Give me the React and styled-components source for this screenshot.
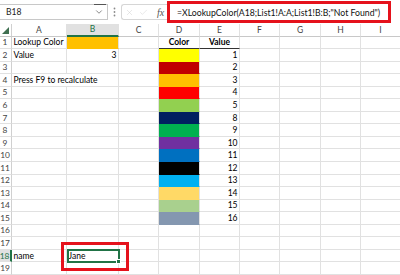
import styled, { createGlobalStyle } from "styled-components";
import { X, Check, ChevronDown } from "lucide-react";

const GlobalStyle = createGlobalStyle`
  html, body {
    margin: 0;
    padding: 0;
    background: #fff;
  }
  body {
    font-family: Lato, "Liberation Sans", sans-serif;
  }
`;

const Screen = styled.div`
  position: relative;
  width: 400px;
  height: 275px;
  overflow: hidden;
  background: #fff;
`;

const Toolbar = styled.div`
  height: 24px;
  display: flex;
  align-items: center;
`;

const NameBox = styled.div`
  position: relative;
  box-sizing: border-box;
  width: 108px;
  height: 16px;
  border: 1px solid #c8c8c8;
  border-left: none;
  display: flex;
  align-items: center;
  justify-content: space-between;
  padding: 0 3px 0 6px;
  font-size: 8.6px;
  color: #222;

  &::after {
    content: "";
    position: absolute;
    top: -1px;
    right: 1px;
    width: 12px;
    height: 1px;
    background: #555;
  }
`;

const Dots = styled.div`
  width: 13px;
  display: flex;
  justify-content: center;
  color: #8a8a8a;
`;

const FxBox = styled.div`
  box-sizing: border-box;
  width: 46px;
  height: 16px;
  border: 1px solid #d6d6d6;
  border-right: none;
  border-radius: 3px 0 0 3px;
  display: flex;
  align-items: center;
  gap: 5px;
  padding-left: 3px;
  color: #c4c4c4;
`;

const Fx = styled.span`
  font-family: "Liberation Serif", serif;
  font-style: italic;
  font-size: 10px;
  color: #555;
  margin-left: 4px;
`;

const FormulaInput = styled.div`
  box-sizing: border-box;
  width: 224px;
  height: 22px;
  border: 3px solid #e5121c;
  display: flex;
  align-items: center;
  padding-left: 7px;
  font-size: 8.7px;
  color: #111;
  white-space: nowrap;
`;

const Sheet = styled.div`
  display: grid;
  grid-template-columns: 12px 55px 52px 40px 41px 40px 40px 41px 40px 40px;
  grid-template-rows: 12.5px repeat(19, 12.55px);
`;

const Corner = styled.div`
  box-sizing: border-box;
  border-right: 1px solid #d0d0d0;
  border-bottom: 1px solid #c8c8c8;
  display: flex;
  align-items: flex-end;
  justify-content: center;
  padding-bottom: 2px;
`;

const ColHead = styled.div`
  box-sizing: border-box;
  background: ${(p) => (p.$active ? "#e1e1e1" : "#fff")};
  border-right: 1px solid #e1e1e1;
  border-bottom: ${(p) => (p.$active ? "2px solid #217346" : "1px solid #c8c8c8")};
  color: ${(p) => (p.$active ? "#217346" : "#444")};
  font-size: 8.5px;
  display: flex;
  align-items: center;
  justify-content: center;
`;

const RowHead = styled.div`
  box-sizing: border-box;
  background: ${(p) => (p.$active ? "#e1e1e1" : "#fff")};
  border-right: ${(p) => (p.$active ? "2px solid #217346" : "1px solid #d0d0d0")};
  border-bottom: 1px solid #e1e1e1;
  color: ${(p) => (p.$active ? "#217346" : "#444")};
  font-size: 8.4px;
  display: flex;
  align-items: center;
  justify-content: center;
  padding-right: 1px;
  white-space: nowrap;
`;

const Cell = styled.div`
  box-sizing: border-box;
  grid-column: ${(p) => (p.$span ? `span ${p.$span}` : "auto")};
  background: ${(p) => p.$fill || "#fff"};
  border-right: 1px solid #e1e1e1;
  border-bottom: 1px solid ${(p) => p.$line || p.$fill || "#e1e1e1"};
  display: flex;
  align-items: center;
  justify-content: ${(p) =>
    p.$align === "right" ? "flex-end" : p.$align === "center" ? "center" : "flex-start"};
  padding: 0 1.5px;
  font-size: 8.5px;
  font-weight: ${(p) => (p.$bold ? 700 : 400)};
  color: #000;
  white-space: nowrap;
`;

const Selection = styled.div`
  position: absolute;
  left: 66.5px;
  top: 249px;
  width: 53.5px;
  height: 13.5px;
  box-sizing: border-box;
  border: 2px solid #217346;

  &::after {
    content: "";
    position: absolute;
    right: -3px;
    bottom: -3px;
    width: 3px;
    height: 3px;
    background: #217346;
    border: 1px solid #fff;
  }
`;

const Callout = styled.div`
  position: absolute;
  left: 61px;
  top: 242px;
  width: 68px;
  height: 29px;
  box-sizing: border-box;
  border: 3px solid #e5121c;
`;

const columns = ["A", "B", "C", "D", "E", "F", "G", "H", "I"];

const swatches = [
  ["#FFFF00", 1],
  ["#C00000", 2],
  ["#FFC000", 3],
  ["#FF0000", 4],
  ["#92D050", 5],
  ["#002060", 8],
  ["#00B050", 9],
  ["#7030A0", 10],
  ["#0070C0", 11],
  ["#000000", 12],
  ["#00B0F0", 13],
  ["#FFD966", 14],
  ["#A9D08E", 15],
  ["#8497B0", 16],
];

function rowCells(r) {
  const cells = {};
  if (r === 1) {
    cells.A = { text: "Lookup Color" };
    cells.B = { fill: "#FFC000" };
    cells.D = { text: "Color", bold: true, align: "center", line: "#333" };
    cells.E = { text: "Value", bold: true, align: "center", line: "#333" };
  }
  if (r === 2) {
    cells.A = { text: "Value" };
    cells.B = { text: "3", align: "right" };
  }
  if (r === 4) cells.A = { text: "Press F9 to recalculate", span: 2 };
  if (r === 18) {
    cells.A = { text: "name" };
    cells.B = { text: "Jane" };
  }
  const sw = swatches[r - 2];
  if (sw) {
    cells.D = { fill: sw[0] };
    cells.E = { text: String(sw[1]), align: "right" };
  }
  return cells;
}

function Row({ r }) {
  const cells = rowCells(r);
  const out = [
    <RowHead key="h" $active={r === 18}>
      {r}
    </RowHead>,
  ];
  let skip = 0;
  columns.forEach((c) => {
    if (skip > 0) {
      skip--;
      return;
    }
    const cell = cells[c] || {};
    if (cell.span) skip = cell.span - 1;
    out.push(
      <Cell
        key={c}
        $span={cell.span}
        $fill={cell.fill}
        $line={cell.line}
        $align={cell.align}
        $bold={cell.bold}
      >
        {cell.text}
      </Cell>
    );
  });
  return out;
}

export default function App() {
  const rows = Array.from({ length: 19 }, (_, i) => i + 1);
  return (
    <Screen>
      <GlobalStyle />
      <Toolbar>
        <NameBox>
          <span>B18</span>
          <ChevronDown size={10} strokeWidth={1.5} color="#444" />
        </NameBox>
        <Dots>
          <svg width="3" height="10" viewBox="0 0 3 10">
            <circle cx="1.5" cy="1.5" r="0.9" fill="currentColor" />
            <circle cx="1.5" cy="5" r="0.9" fill="currentColor" />
            <circle cx="1.5" cy="8.5" r="0.9" fill="currentColor" />
          </svg>
        </Dots>
        <FxBox>
          <X size={9} strokeWidth={1} />
          <Check size={9} strokeWidth={1} />
          <Fx>fx</Fx>
        </FxBox>
        <FormulaInput>=XLookupColor(A18;List1!A:A;List1!B:B;"Not Found")</FormulaInput>
      </Toolbar>
      <Sheet>
        <Corner>
          <svg width="7" height="7" viewBox="0 0 7 7">
            <polygon points="7,0 7,7 0,7" fill="#3f6f50" />
          </svg>
        </Corner>
        {columns.map((c) => (
          <ColHead key={c} $active={c === "B"}>
            {c}
          </ColHead>
        ))}
        {rows.map((r) => (
          <Row key={r} r={r} />
        ))}
      </Sheet>
      <Selection />
      <Callout />
    </Screen>
  );
}
